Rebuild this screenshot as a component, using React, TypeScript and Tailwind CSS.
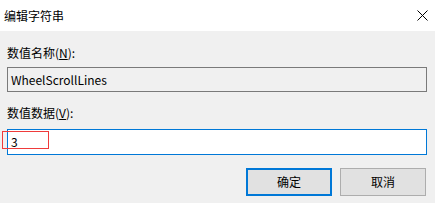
import React from "react";

export default function App() {
  const font = { fontFamily: '"Noto Sans CJK SC", "Noto Sans", sans-serif' };
  return (
    <div className="w-[435px] h-[203px] overflow-hidden bg-[#f0f0f0] text-[12px] text-black" style={font}>
      <div className="h-[31px] bg-white flex items-center justify-between pl-[4px] pr-[7px]">
        <span className="text-[12px] leading-[16px] text-black">编辑字符串</span>
        <svg width="11" height="11" viewBox="0 0 11 11" className="mt-[0px]">
          <path d="M0.5 0.5 L10.5 10.5 M10.5 0.5 L0.5 10.5" stroke="#000" strokeWidth="1" />
        </svg>
      </div>
      <div className="pl-[7px] pr-[8px]">
        <div className="mt-[14px] h-[16px] leading-[16px]">
          数值名称(<span className="underline">N</span>):
        </div>
        <div className="mt-[6px] h-[25px] border border-[#7a7a7a] bg-[#f0f0f0] flex items-center pl-[3px] leading-[16px]">
          WheelScrollLines
        </div>
        <div className="mt-[13px] h-[16px] leading-[16px]">
          数值数据(<span className="underline">V</span>):
        </div>
        <div className="relative mt-[8px]">
          <div className="h-[26px] border border-[#0078d7] bg-white flex items-center pl-[3px] leading-[16px]">
            3
          </div>
          <div className="absolute left-[-5px] top-[2px] w-[47px] h-[18px] border border-[#ef3b3b]"></div>
        </div>
        <div className="mt-[13px] flex justify-end gap-[8px] pr-[1px]">
          <button className="w-[86px] h-[28px] border-2 border-[#0078d7] bg-[#e1e1e1] flex items-center justify-center leading-[16px]">
            确定
          </button>
          <button className="w-[86px] h-[28px] border border-[#adadad] bg-[#e1e1e1] flex items-center justify-center leading-[16px]">
            取消
          </button>
        </div>
      </div>
    </div>
  );
}
